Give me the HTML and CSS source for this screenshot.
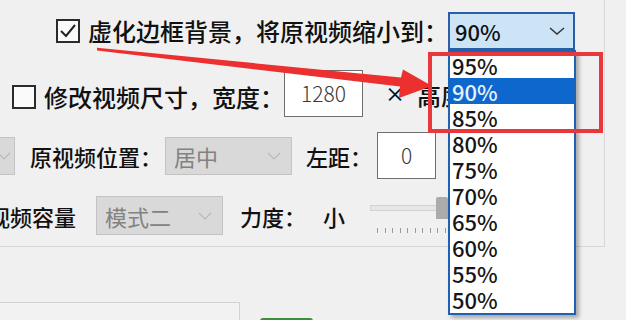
FILE: index.html
```html
<!DOCTYPE html>
<html lang="zh-CN">
<head>
    <meta charset="UTF-8">
    <title>视频设置</title>
    <link rel="stylesheet" href="styles.css">
</head>
<body>
    <div class="window">
        <div class="group">
            <div class="row row1">
                <span class="check">
                    <svg width="20" height="20" viewBox="0 0 20 20"><path d="M 3 10 L 8 15 L 17 4" stroke="#222" stroke-width="2" fill="none"/></svg>
                </span>
                <span class="label">虚化边框背景，将原视频缩小到：</span>
                <div class="select">
                    <span>90%</span>
                    <svg width="16" height="8" viewBox="0 0 16 8"><path d="M 1 1 L 8 7 L 15 1" stroke="#333" stroke-width="1.5" fill="none"/></svg>
                </div>
            </div>
            <div class="row row2">
                <span class="check"></span>
                <span class="label">修改视频尺寸，宽度：</span>
                <span class="field wide">1280</span>
                <span class="times">×</span>
                <span class="label">高度：</span>
            </div>
            <div class="row row3">
                <div class="combo cutLeft">
                    <svg width="14" height="8" viewBox="0 0 14 8"><path d="M 1 1 L 7 7 L 13 1" stroke="#b8b8b8" stroke-width="1.2" fill="none"/></svg>
                </div>
                <span class="label small">原视频位置：</span>
                <div class="combo">
                    <span>居中</span>
                    <svg width="14" height="8" viewBox="0 0 14 8"><path d="M 1 1 L 7 7 L 13 1" stroke="#b8b8b8" stroke-width="1.2" fill="none"/></svg>
                </div>
                <span class="label small gapL">左距：</span>
                <span class="field">0</span>
            </div>
            <div class="row row4">
                <span class="label small cutText">视频容量</span>
                <div class="combo">
                    <span>模式二</span>
                    <svg width="14" height="8" viewBox="0 0 14 8"><path d="M 1 1 L 7 7 L 13 1" stroke="#b8b8b8" stroke-width="1.2" fill="none"/></svg>
                </div>
                <span class="label small gapF">力度：</span>
                <span class="label small gapF">小</span>
                <div class="slider">
                    <div class="track"></div>
                    <div class="thumb"></div>
                    <div class="ticks">
                        <i></i><i></i><i></i><i></i><i></i><i></i><i></i><i></i><i></i><i></i>
                    </div>
                </div>
            </div>
        </div>
        <div class="footer">
            <div class="panelBox"></div>
            <div class="btnGreen"></div>
        </div>

        <ul class="dropdown">
            <li>95%</li>
            <li class="active">90%</li>
            <li>85%</li>
            <li>80%</li>
            <li>75%</li>
            <li>70%</li>
            <li>65%</li>
            <li>60%</li>
            <li>55%</li>
            <li>50%</li>
        </ul>
        <div class="callout"></div>
        <svg class="arrow" width="626" height="320" viewBox="0 0 626 320">
            <polygon points="97,47.8 401,77.5 403,69.5 432,86 399,98 400,86.5 97,50.6" fill="#ec2f2f"/>
        </svg>
    </div>
</body>
</html>
```

FILE: styles.css
```css
body{
    margin: 0;
    padding: 0;
    background-color: #f0f0f0;
    font-family: "Noto Sans CJK SC", "Noto Sans", sans-serif;
    font-weight: 500;
    color: #111111;
}
.window{
    position: relative;
    width: 626px;
    height: 320px;
    overflow: hidden;
}
.group{
    box-sizing: border-box;
    width: 605px;
    height: 247px;
    padding-top: 12px;
    border-right: 1px solid #d7d7d7;
    border-bottom: 1px solid #d7d7d7;
}
.row{
    display: flex;
    align-items: center;
    line-height: 1;
    white-space: nowrap;
}
.row1{
    height: 38px;
    padding-left: 56px;
}
.row2{
    height: 47px;
    margin-top: 20px;
    padding-left: 12px;
}
.row3{
    height: 47px;
    margin-top: 15px;
}
.row4{
    height: 39px;
    margin-top: 17px;
}
.label{
    font-size: 24px;
}
.label.small{
    font-size: 22px;
}
.check{
    box-sizing: border-box;
    width: 24px;
    height: 24px;
    margin-right: 8px;
    border: 2px solid #2b2b2b;
    background-color: #fafafa;
    display: flex;
    align-items: center;
    justify-content: center;
}
.row2 .check,
.row2 .label{
    margin-top: 6px;
}
.row2 .field + .times + .label{
    margin-top: 2px;
}
.select{
    box-sizing: border-box;
    width: 127px;
    height: 38px;
    border: 2px solid #2a5fa5;
    background-color: #cde3f6;
    display: flex;
    align-items: center;
    justify-content: space-between;
    padding: 0 8px 0 5px;
    font-size: 22px;
}
.field{
    box-sizing: border-box;
    width: 59px;
    height: 47px;
    border: 1px solid #6e6e6e;
    background-color: #ffffff;
    display: flex;
    align-items: center;
    justify-content: center;
    font-size: 21px;
    color: #3a3a3a;
    font-weight: 300;
}
.field.wide{
    width: 79px;
}
.times{
    display: inline-block;
    width: 13px;
    margin-left: 22px;
    margin-right: 19px;
    font-size: 20px;
}
.combo{
    box-sizing: border-box;
    width: 127px;
    height: 38px;
    border: 1px solid #c3c3c3;
    background-color: #d9d9d9;
    display: flex;
    align-items: center;
    justify-content: space-between;
    padding: 0 10px 0 8px;
    font-size: 22px;
    font-weight: 400;
    color: #828282;
}
.row3 .combo{
    margin-left: 3px;
}
.combo.cutLeft{
    margin-left: -112px;
    margin-right: 15px;
    justify-content: flex-end;
    padding-right: 3px;
}
.row4 .combo{
    margin-left: 20px;
    height: 39px;
}
.cutText{
    margin-left: -12px;
}
.gapL{
    margin-left: 14px;
    margin-right: 5px;
}
.gapF{
    margin-left: 17px;
}
.slider{
    position: relative;
    width: 80px;
    height: 39px;
    margin-left: 25px;
}
.track{
    position: absolute;
    left: 0;
    top: 9px;
    width: 80px;
    height: 6px;
    box-sizing: border-box;
    border: 1px solid #d2d2d2;
    background-color: #e6e6e6;
}
.thumb{
    position: absolute;
    left: 66px;
    top: 1px;
    width: 12px;
    height: 22px;
    background-color: #ababab;
    border-radius: 2px 2px 0 0;
}
.ticks{
    position: absolute;
    left: 7px;
    top: 32px;
    display: flex;
    gap: 6.5px;
}
.ticks i{
    display: block;
    width: 1px;
    height: 5px;
    background-color: #9a9a9a;
}
.footer{
    display: flex;
    align-items: flex-start;
    margin-top: 55px;
}
.panelBox{
    width: 239px;
    height: 30px;
    border-top: 1px solid #d2d2d2;
    border-right: 1px solid #d2d2d2;
    background-color: #f2f2f2;
}
.btnGreen{
    width: 53px;
    height: 20px;
    margin-left: 20px;
    margin-top: 16px;
    background-color: #3f8f3a;
    border-radius: 3px 3px 0 0;
}
.dropdown{
    position: absolute;
    left: 448px;
    top: 50px;
    box-sizing: border-box;
    width: 128px;
    height: 265px;
    margin: 0;
    padding: 0;
    list-style: none;
    background-color: #ffffff;
    border: 2px solid #1f62b3;
    box-shadow: 3px 3px 4px rgba(0,0,0,0.3);
    font-size: 22px;
}
.dropdown li{
    height: 26px;
    line-height: 26px;
    padding-left: 2px;
    color: #161616;
}
.dropdown li.active{
    background-color: #0e67cc;
    color: #e6f0ff;
}
.callout{
    position: absolute;
    left: 428px;
    top: 52px;
    box-sizing: border-box;
    width: 175px;
    height: 81px;
    border: 4px solid #e8383b;
}
.arrow{
    position: absolute;
    left: 0;
    top: 0;
}
```
